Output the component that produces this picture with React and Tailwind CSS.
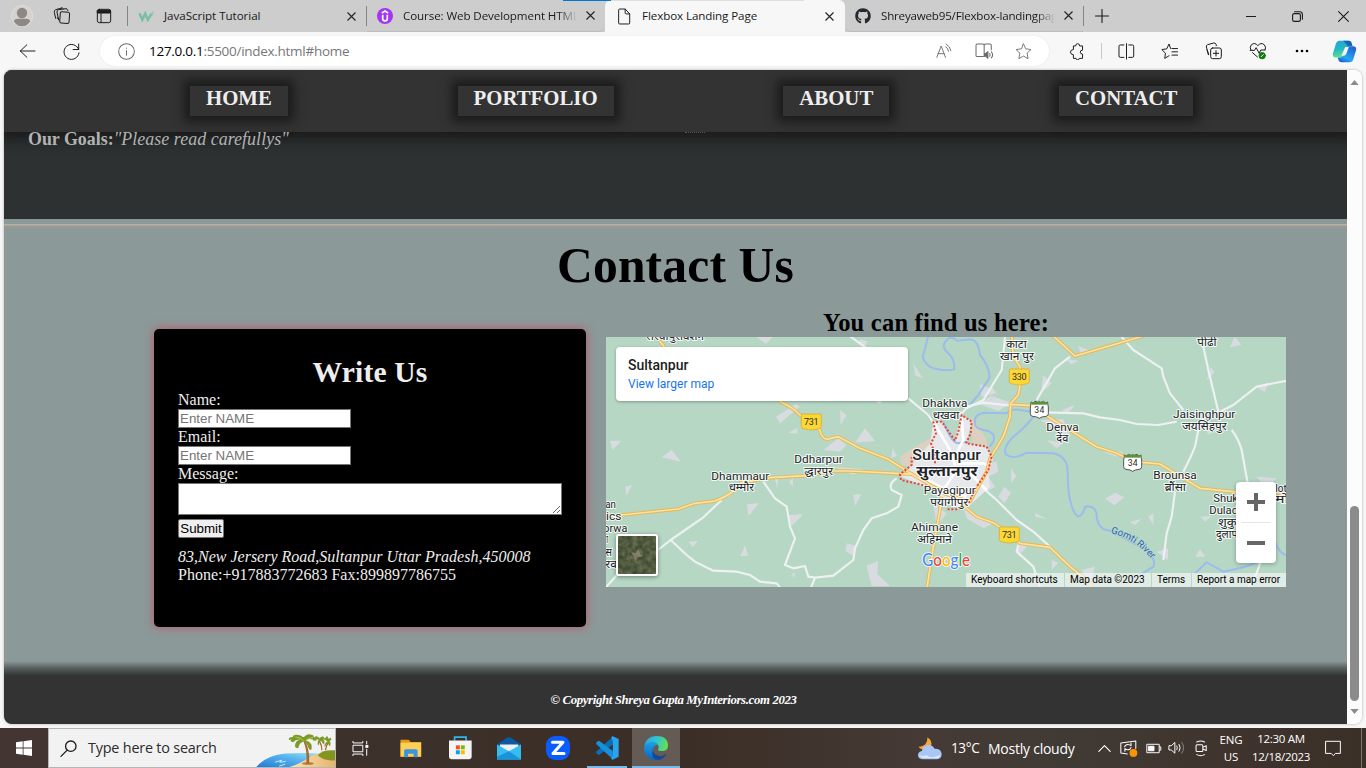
import React from "react";
import { FaGithub } from "react-icons/fa";

const Close = () => (
  <svg viewBox="0 0 9 9" className="h-[9px] w-[9px] shrink-0" fill="none" stroke="#222" strokeWidth="1.1">
    <path d="M.5 .5l8 8M8.5 .5l-8 8" />
  </svg>
);

const Line = ({ box, className, children, stroke = "#1b1b1b", sw = 3 }) => (
  <svg viewBox={box} className={"shrink-0 " + className} fill="none" stroke={stroke} strokeWidth={sw} strokeLinecap="round" strokeLinejoin="round">
    {children}
  </svg>
);

function TabStrip() {
  return (
    <div className="flex h-8 items-center bg-[#cdcdcd] text-[11.6px] text-[#1a1a1a] relative">
      <svg viewBox="33 15 66 66" className="ml-[11px] h-[22px] w-[22px] shrink-0">
        <circle cx="66" cy="48" r="32" fill="#d6d3cf" stroke="#e4e1dd" strokeWidth="2" />
        <circle cx="66" cy="39" r="15.500" fill="#8d8884" />
        <path d="M41 63q4-7 12-7h26q8 0 12 7q-9 16-25 16t-25-16z" fill="#8d8884" />
      </svg>
      <Line box="160 22 54 54" className="ml-5 h-[18px] w-[18px]">
        <rect x="181" y="37" width="28" height="34" rx="5" transform="rotate(4 195 54)" fill="#cdcdcd" />
        <path d="M177 61l-5-24q-1-6 5-7l23-3M168 56l-4-18q-1-6 4-8l18-5M201 28q3 1 4 5M186 25q3-1 5 2M178 60q-4-1-5-6" />
      </Line>
      <Line box="288 24 48 48" className="ml-[25px] h-4 w-4">
        <rect x="292" y="28" width="40" height="40" rx="6" />
        <path d="M293 31h38v8h-38z" fill="#1b1b1b" />
        <path d="M303 40v27" />
      </Line>
      <div className="ml-[15px] h-5 w-px shrink-0 bg-[#858585]" />
      <div className="flex h-full w-[238px] shrink-0 items-center pl-[10px] pr-[10px]">
        <svg viewBox="414 30 50 34" className="h-[11px] w-[17px] shrink-0">
          <path d="M417 37l9 20l9-19l8 19l12-19" fill="none" stroke="#7cc0a2" strokeWidth="8" />
          <path d="M455 33h5l-3 4q5 3 0 6h-3" fill="none" stroke="#7cc0a2" strokeWidth="2" />
        </svg>
        <span className="ml-[9px] flex-1 whitespace-nowrap tracking-[-0.04px]">JavaScript Tutorial</span>
        <Close />
      </div>
      <div className="h-5 w-px shrink-0 bg-[#858585]" />
      <div className="flex h-full w-[238px] shrink-0 items-center rounded-br-md border-b border-[#bcbcbc] pl-[10px] pr-[10px]">
        <svg viewBox="0 0 16 16" className="h-4 w-4 shrink-0">
          <circle cx="8" cy="8" r="8" fill="#a435f0" />
          <path d="M4.800 4.900L8 3.100l3.200 1.800M5.700 6.700v4q0 2.100 2.300 2.100t2.300-2.100v-4" fill="none" stroke="#fff" strokeWidth="1.700" />
        </svg>
        <span className="ml-[10px] w-[176px] shrink-0 overflow-hidden whitespace-nowrap tracking-[-0.1px] [mask-image:linear-gradient(90deg,#000_88%,transparent_99%)]">Course: Web Development HTML</span>
        <span className="flex-1" />
        <Close />
      </div>
      <div className="flex h-full w-[240px] shrink-0 items-center rounded-t-md bg-[#f7f7f7] pl-[13px] pr-[11px]">
        <Line box="503 22 40 52" className="h-[17px] w-[13px]" >
          <path d="M525 25h-17q-3 0-3 3v40q0 3 3 3h28q3 0 3-3v-28l-14-15v12q0 3 3 3h11" />
        </Line>
        <span className="ml-[11px] flex-1 whitespace-nowrap tracking-[-0.09px]">Flexbox Landing Page</span>
        <Close />
      </div>
      <div className="flex h-full w-[238px] shrink-0 items-center rounded-bl-md border-b border-[#bcbcbc] pl-[10px] pr-[10px]">
        <FaGithub className="h-4 w-4 shrink-0 text-[#24292f]" />
        <span className="ml-[10px] w-[176px] shrink-0 overflow-hidden whitespace-nowrap tracking-[-0.2px] [mask-image:linear-gradient(90deg,#000_88%,transparent_99%)]">Shreyaweb95/Flexbox-landingpage</span>
        <span className="flex-1" />
        <Close />
      </div>
      <div className="h-5 w-px shrink-0 bg-[#858585]" />
      <Line box="0 0 14 14" sw={1.1} className="ml-[11px] h-[14px] w-[14px]"><path d="M7 .5v13M.5 7h13" /></Line>
      <div className="ml-auto flex items-center pr-[17px]">
        <div className="h-px w-[10px] bg-[#1b1b1b]" />
        <Line box="0 0 11 11" sw={1.1} className="ml-[36px] h-[11px] w-[11px]">
          <rect x=".6" y="2.600" width="7.800" height="7.800" rx="1.700" /><path d="M2.600 .8h5q2.800 0 2.800 2.800v4.600" />
        </Line>
        <Line box="0 0 11 11" sw={1.1} className="ml-[35px] h-[11px] w-[11px]"><path d="M.6 .6l9.800 9.800M10.400 .6L.6 10.400" /></Line>
      </div>
      <div className="absolute left-[563px] top-0 flex h-px w-[241px]">
        <div className="w-12 bg-[#0078d4]" /><div className="flex-1 bg-[#dedede]" />
      </div>
    </div>
  );
}

function Toolbar() {
  return (
    <div className="flex h-[38px] items-center bg-[#f7f7f7]">
      <Line box="58 128 52 48" className="ml-[19px] h-4 w-[17px]"><path d="M62 152h45M82 133l-20 19l20 19" /></Line>
      <Line box="190 128 52 52" className="ml-[27px] h-[17px] w-[17px]"><path d="M238 148a23 23 0 1 0 1 10M238 131v17h-17" /></Line>
      <div className="ml-[20px] flex h-[30px] w-[949px] shrink-0 items-center rounded-full bg-white shadow-[0_0_2px_#e2e2e2]">
        <Line box="353 128 50 50" stroke="#6e6e6e" className="ml-[18px] h-[17px] w-[17px]"><circle cx="378" cy="153" r="23" /><path d="M378 150v14M378 143v.5" /></Line>
        <span className="ml-[14px] whitespace-nowrap text-[13.500px] tracking-[-0.28px] text-[#777]"><span className="text-black">127.0.0.1</span>:5500/index.html#home</span>
        <div className="ml-auto flex items-center">
          <Line box="90 128 50 48" stroke="#777" className="h-4 w-[17px]"><path d="M95 171l13-34l13 34M99 160h18M122 139q7 6 8 14M123 131q12 7 14 20" /></Line>
          <Line box="208 130 56 50" stroke="#6b6b6b" className="ml-[23px] h-[17px] w-[19px]">
            <path d="M235 134v36M232 170h-18q-3 0-3-3v-30q0-4 3-4h17q4 0 4 4q0-4 4-4h14q3 0 3 4v13" /><path d="M236 161h4l6-6v20l-6-6h-4z" fill="#6b6b6b" /><path d="M251 161q3 4 0 8M256 156q8 9 0 18" />
          </Line>
          <Line box="328 128 52 52" stroke="#777" className="ml-[21px] mr-[17px] h-[17px] w-[17px]"><path d="M354 131l7 15l16 2l-12 11l3 17l-14-8l-14 8l3-17l-12-11l16-2z" /></Line>
        </div>
      </div>
      <Line box="490 126 48 52" className="ml-[20px] h-[17px] w-4"><path d="M505 135h5q0-7 6-7t6 7h9v13q-7 0-7 6t7 6v13h-10q0 4-5 4t-5-4h-8v-11q-9-1-9-8t9-8v-10z" /></Line>
      <div className="ml-4 h-4 w-px shrink-0 bg-[#c9c9c9]" />
      <Line box="634 128 50 52" className="ml-4 h-[17px] w-[17px]"><path d="M651 134h-11q-4 0-4 4v30q0 4 4 4h11M666 134h11q4 0 4 4v30q0 4-4 4h-11M659 130v47" /></Line>
      <Line box="766 128 54 52" className="ml-[26px] h-[17px] w-[18px]"><path d="M795 145l-5-14l-7 15l-15 2l11 11l-2 16l13-8M799 145h17M799 155h17M799 165h17" /></Line>
      <Line box="898 126 54 54" className="ml-[26px] h-[18px] w-[18px]"><rect x="915" y="144" width="32" height="32" rx="6" /><path d="M931 152v16M923 160h16M909 164l-7-23q-1-5 4-7l18-5q5-1 7 4l1 4M908 164q-1-2-1-5l-3-9" /></Line>
      <Line box="1030 128 56 54" className="ml-[26px] h-[18px] w-[19px]">
        <path d="M1035 152q-5-9 2-16q10-8 19 3q9-11 19-3q7 7 3 15M1033 153h13l5-8l9 17l5-10h13M1040 160l15 13" />
        <circle cx="1069" cy="169" r="9.500" fill="#107c10" stroke="#107c10" /><path d="M1066 172l6-6" stroke="#fff" />
      </Line>
      <svg viewBox="0 0 14 4" className="ml-[27px] h-1 w-[14px] shrink-0"><circle cx="2" cy="2" r="1.300" /><circle cx="7" cy="2" r="1.300" /><circle cx="12" cy="2" r="1.300" /></svg>
      <svg viewBox="1276 118 76 70" className="ml-[23px] h-[23px] w-[25px] shrink-0">
        <defs>
          <linearGradient id="cpA" x1="0" y1="0" x2="0.2" y2="1"><stop offset="0" stopColor="#22a6d4" /><stop offset=".55" stopColor="#25b8c4" /><stop offset="1" stopColor="#5fe08f" /></linearGradient>
          <linearGradient id="cpB" x1="0.6" y1="0" x2="0" y2="1"><stop offset="0" stopColor="#2468d8" /><stop offset=".6" stopColor="#22a8f0" /><stop offset="1" stopColor="#1a3fd0" /></linearGradient>
        </defs>
        <path d="M1299 120h28q5 0 7 5l4 11h-8q-6 0-8 7l-7 22q-2 6-8 6h-19q-12 0-9-13l9-29q3-9 11-9z" fill="url(#cpA)" />
        <path d="M1310 120h18q5 0 7 5l3 11h-10q-7 0-9-6z" fill="#1666b4" />
        <path d="M1326 137h14q12 0 9 13l-8 26q-3 10-12 10h-24q-7 0-9-6l-3-9h9q7 0 9-7l7-21q2-6 8-6z" fill="url(#cpB)" />
        <path d="M1308 158l8-19h11l-7 19q-3 8-9 8h-7z" fill="#f7f7f7" />
      </svg>
    </div>
  );
}

const NavItem = ({ children }) => (
  <a className="h-[30px] bg-[#333] px-4 text-[20.800px] font-bold leading-[24px] text-[#eee] shadow-[0_0_10px_6px_#1b1b1b]">{children}</a>
);

const roads = [
  "M18 650L65 645L235 627L285 610L345 603Q380 590 400 573L425 548L510 533L620 527L700 513L750 513L905 521L940 523",
  "M178 122L205 155M520 290L545 307Q575 320 600 345L635 365L660 392Q665 415 680 418L715 410L780 445L865 478L940 525L1000 560L1060 585L1100 625L1130 650L1180 668L1225 700L1260 730L1350 742L1410 800L1460 840L1480 870",
  "M1025 590L1018 640L1000 740L980 870",
  "M1235 105L1240 170L1260 200L1260 255L1255 285L1232 310L1230 350L1210 410L1170 475L1160 515L1110 605L1060 590L1030 580",
  "M1232 313L1295 317L1320 335L1490 440L1550 460L1600 485L1680 492L1800 565L1930 578L2060 578",
  "M1360 108L1425 168L1630 108",
];
const minor = [
  "M10 870L60 815L180 745L212 720L310 652L365 600",
  "M212 720L260 765L285 785L340 812L410 815L450 825L480 845L530 850L540 862",
  "M490 545L525 595L560 620L570 680L585 715L555 795L580 805L615 798L625 830L645 833L700 827L760 780L765 745L790 690L815 655L860 640L895 620L905 585L875 570Q865 550 890 535",
  "M645 833L630 870",
  "M745 105L800 145M925 295L985 345L1020 400L1050 450",
  "M1410 170L1365 205L1345 240L1330 265L1310 300",
  "M1215 111L1205 210L1150 300L1100 325L1080 345",
  "M1100 320L1150 308L1232 317M1335 337L1450 340L1500 352L1560 360L1610 372L1675 375L1730 365",
  "M1560 105L1600 150L1685 205L1690 230L1710 280L1750 330",
  "M1810 140L1825 210L1855 335M1860 335L1900 315L1970 260L2060 242",
  "M1895 390Q1915 415 1925 450L1945 560M1795 390L1785 440L1770 475L1750 515M1725 575L1715 650L1700 700L1690 780",
  "M1150 565L1190 600L1250 660L1300 695L1350 740M1255 735L1250 755L1300 800L1320 860",
  "M1990 760L1970 820L1940 870",
];
const water = [
  "M985 105Q975 150 968 170Q975 195 1000 205Q1040 215 1062 208Q1066 180 1045 160Q1020 140 1040 120Q1055 105 1070 122L1110 118Q1135 120 1140 165Q1170 200 1168 235Q1150 260 1135 285L1100 325",
  "M1125 370Q1120 345 1150 338L1220 340Q1235 325 1260 330L1295 335",
  "M1125 370Q1125 385 1150 390Q1190 395 1180 425L1170 440",
  "M1310 335Q1290 370 1235 415Q1205 450 1220 465Q1245 480 1280 458L1360 460Q1405 470 1403 520L1405 570Q1415 640 1435 650Q1450 645 1455 620Q1490 615 1490 650Q1495 690 1530 692L1640 750Q1670 780 1660 800L1620 825",
  "M1780 825L1820 787L1870 815L1930 802L1990 780M2020 710Q2035 760 2058 765",
  "M1030 365Q1055 430 1075 430L1100 425",
];
const red = "M1005 490L1005 460L993 430L1008 400L1000 367L1025 365L1065 422L1075 395L1085 345L1115 365L1112 400L1098 430L1160 440L1175 470L1165 510L1130 560L1105 610L1075 628L1040 628M935 470L935 495L900 523L903 540L990 560";
const patches = "M30 422l35 0l-28 28zM185 472l30-22l28 35zM75 560l22-5l-18 32zM440 612l36-2l-30 38zM565 645l45-2l-35 35zM760 585l24-3l-18 35zM435 735l10 32l-24 2zM265 725l28-2l-14 18zM740 730l28 8l-12 28l-20-14zM800 797l34-14l-2 40l38 35h-55zM565 398l28-15l-2 18zM528 350l60-38l12 8l-60 50zM720 330l20 16l-18 28zM795 385l30 38l-60 5zM670 450l45-35l25 20l-20 20zM878 445l-5 30l18-8zM940 190l28 45l-22-8zM780 118l22 6l-8 18l-20-14zM470 111h48l-20 20zM525 535l10 0l-4 32zM568 545l12-15l-2 30zM700 500l90 8l-30 16zM1140 252l45 20l-40 20zM1330 225l25 25l-20 20l-10-10zM1435 138l30 12l-20 20zM1395 175l42 8l-24 10zM1890 142l14-32l20 24zM1820 242l12-40l12 14zM1970 262l35-15l-10 30zM1130 310l45-22l60 20l-40 25zM1385 330l40-15l-20 25zM1320 360l70-2l20 50l-30-10zM1340 420l50 10l-20 15zM1233 505l16 24l-16 20zM1195 590l18-30l20 18l-20 32zM1515 596l30-18l28 14l-30 24zM1645 650l15-10v35zM1305 638l35 20l-34-8zM1590 665l35-8l-20 17zM1800 650l34-2l-18 17zM1785 770l15-22l16 22zM1670 755l34-10v35zM1355 780l20 8l-20 22zM1090 620l90 50l-30 15l-50-30zM1445 810l40-10l-15 50zM1820 395l18-4l-10 14zM1000 610l40 30l-30 40zM1510 455l60 0l-20 15zM1970 530l60 5l-30 30zM1160 490l30-5l5 30l-30 15zM1135 555l30-25l20 30l-25 15zM1145 290l30-30l15 20zM1250 730l30 10l-25 30zM575 820l12 0l-5 14zM820 300l28 0l-8 14z";

const labels = [
  [138, 121, 174, "सरैयापुरावंशन", 31],
  [334, 539, 174, "Dhammaur", 34], [386, 574, 76, "धम्मौर", 31],
  [583, 489, 145, "Ddharpur", 34], [613, 526, 86, "द्धारपुर", 31],
  [967, 321, 135, "Dhakhva", 34], [998, 356, 80, "धखवा", 31],
  [971, 582, 156, "Payagipur", 34], [991, 617, 114, "पयागीपुर", 31],
  [933, 692, 141, "Ahimane", 34], [951, 728, 104, "अहिमाने", 31],
  [1218, 143, 62, "काटा", 31], [1200, 179, 102, "खान पुर", 31],
  [1792, 137, 58, "पीढी", 31],
  [1339, 392, 97, "Denva", 34], [1369, 427, 36, "देंव", 31],
  [1719, 354, 187, "Jaisinghpur", 34], [1746, 389, 134, "जयसिंहपुर", 31],
  [1660, 537, 130, "Brounsa", 34], [1694, 572, 64, "ब्रौंसा", 31],
  [1840, 606, 74, "Shuk", 34], [1828, 641, 86, "Dulad", 34],
  [1854, 679, 56, "शुकु", 31], [1848, 714, 64, "दुलाप", 31],
  [2026, 577, 34, "lot", 34], [2026, 608, 40, "मो", 31],
  [16, 623, 32, "an", 34], [18, 660, 46, "ics", 34], [10, 696, 72, "orwa", 34],
  [6, 730, 18, "ा", 31], [16, 767, 20, "स", 31], [16, 803, 44, "रवा", 31],
];

const Shield = ({ x, y, n }) => (
  <g>
    <path d={`M${x - 30} ${y - 21}q0-3 3-3h54q3 0 3 3v34q0 6-6 7l-16 3q-8 2-16 0l-16-3q-6-1-6-7z`} fill="#fdd835" stroke="#d9a520" strokeWidth="2" />
    <text x={x} y={y + 10} textAnchor="middle" fontSize="27" textLength="44" fill="#2c2c2c" stroke="none">{n}</text>
  </g>
);
const Nh = ({ x, y }) => (
  <g>
    <path d={`M${x - 25} ${y - 20}q8 6 12-2q12 6 13 0q1 6 13 0q4 8 12 2q0 8 2 15v20q0 7-7 8q-14 1-20 6q-6-5-20-6q-7-1-7-8v-20q2-7 2-15z`} fill="#fff" stroke="#555" strokeWidth="3" />
    <path d={`M${x - 24} ${y - 20}h48v8h-48z`} fill="#5c9434" />
    <text x={x} y={y + 13} textAnchor="middle" fontSize="26" textLength="30" fill="#2c2c2c" stroke="none">34</text>
  </g>
);

function MapFrame() {
  return (
    <div className="relative h-[250px] w-[680px] overflow-hidden font-['Roboto','Noto_Sans',sans-serif]">
      <svg viewBox="18 111 2040 750" className="h-[250px] w-[680px]" fill="none" strokeLinejoin="round">
        <rect x="18" y="111" width="2040" height="750" fill="#b5d7c3" />
        <path d={patches} fill="#d8dce1" />
        <path d="M900 468L960 432L1000 410L990 450L935 500L905 495zM1115 350L1150 400L1165 440L1115 430z" fill="#dcd0c0" />
        <path d="M903 530L940 490L990 430L1000 367L1025 362L1062 425L1085 345L1115 365L1100 430L1160 442L1180 475L1165 520L1170 560L1105 620L1060 620L1000 570z" fill="#e7e8ec" />
        {water.map((d) => <path key={d} d={d} stroke="#9bbcec" strokeWidth="6" />)}
        <path d="M500 160L650 365L760 425L850 440L990 405M1170 300L1295 205M1110 600L1350 770M970 740L960 861" stroke="#c6d3cb" strokeWidth="2.500" />
        {minor.map((d) => <path key={d} d={d} stroke="#eef1f2" strokeWidth="6.500" />)}
        <path d="M1000 365L1050 450L1070 510M1085 350L1090 420L1070 460M1070 510L1030 570M950 520L1020 560L1100 590M1070 490L1150 490L1170 500M1100 510L1160 570" stroke="#fff" strokeWidth="8" />
        {roads.map((d) => <path key={d} d={d} stroke="#e9b84c" strokeWidth="10.500" />)}
        {roads.map((d) => <path key={d} d={d} stroke="#f8e2ad" strokeWidth="5" />)}
        <path d={red} stroke="#ea4335" strokeWidth="6" strokeDasharray="6 5.500" />
        <Shield x={634} y={366} n="731" />
        <Shield x={1258} y={231} n="330" />
        <Shield x={1228} y={705} n="731" />
        <Nh x={1318} y={326} />
        <Nh x={1598} y={485} />
        <g stroke="#fff" strokeOpacity=".85" strokeWidth="6" fill="#202428" style={{ paintOrder: "stroke" }}>
          {labels.map(([x, y, w, t, s]) => (
            <text key={t + x} x={x} y={y} textLength={w} lengthAdjust="spacingAndGlyphs" fontSize={s} strokeLinejoin="round">{t}</text>
          ))}
          <text x="937" y="481" textLength="206" lengthAdjust="spacingAndGlyphs" fontSize="45" fontWeight="500">Sultanpur</text>
          <text x="949" y="529" textLength="184" lengthAdjust="spacingAndGlyphs" fontSize="42" fontWeight="700">सुल्तानपुर</text>
        </g>
        <path id="gomti" d="M1532 700Q1600 712 1655 778" />
        <text fontSize="29" fill="#2a62c4" stroke="#b5d7c3" strokeWidth="5" style={{ paintOrder: "stroke" }}><textPath href="#gomti" textLength="148">Gomti River</textPath></text>
        <text x="967" y="798" fontSize="50" textLength="143" lengthAdjust="spacingAndGlyphs" fontWeight="500" fontFamily="Lato" stroke="#fff" strokeWidth="5" style={{ paintOrder: "stroke" }}>
          <tspan fill="#4285f4">G</tspan><tspan fill="#ea4335">o</tspan><tspan fill="#fbbc05">o</tspan><tspan fill="#4285f4">g</tspan><tspan fill="#34a853">l</tspan><tspan fill="#ea4335">e</tspan>
        </text>
      </svg>
      <div className="absolute left-[10px] top-[10px] h-[54px] w-[292px] rounded-sm bg-white pl-3 pt-[9px] shadow-[0_1px_3px_rgba(0,0,0,0.3)]">
        <div className="text-sm font-medium leading-[18px] text-[#1d1d1d]">Sultanpur</div>
        <div className="mt-[2px] text-xs leading-4 text-[#1a73e8]">View larger map</div>
      </div>
      <div className="absolute bottom-[11px] left-[10px] h-[42px] w-[42px] overflow-hidden rounded-[3px] border-2 border-white shadow-[0_1px_4px_rgba(0,0,0,0.4)]">
        <svg viewBox="0 0 38 38" className="h-full w-full">
          <defs><filter id="soil" colorInterpolationFilters="sRGB"><feTurbulence type="fractalNoise" baseFrequency=".2" numOctaves="4" seed="4" /><feColorMatrix values=".3 0 0 0 .17  .25 0 0 0 .23  .2 0 0 0 .15  0 0 0 0 1" /></filter></defs>
          <rect width="38" height="38" filter="url(#soil)" />
          <path d="M13 16l5 1l2-4l2 5l3 2l-5 1l-3 5l-1-5z" fill="#a3967c" opacity=".6" />
        </svg>
      </div>
      <div className="absolute bottom-6 right-[10px] flex h-[81px] w-10 flex-col items-center rounded-sm bg-white shadow-[0_1px_4px_rgba(0,0,0,0.3)]">
        <svg viewBox="0 0 40 40" className="h-10 w-10"><path d="M11 20h18M20 11v18" stroke="#666" strokeWidth="4" /></svg>
        <div className="h-px w-[30px] bg-[#e6e6e6]" />
        <svg viewBox="0 0 40 40" className="h-10 w-10"><path d="M11 20h18" stroke="#666" strokeWidth="4" /></svg>
      </div>
      <div className="absolute bottom-0 right-0 flex h-[14px] w-[320px] gap-px whitespace-nowrap text-[10px] leading-[14px] text-black">
        <span className="w-[98px] bg-[#f5f5f5]/70 pl-[5px]">Keyboard shortcuts</span>
        <span className="w-[86px] bg-[#f5f5f5]/70 pl-[5px] tracking-[-0.02px]">Map data ©2023</span>
        <span className="w-[39px] bg-[#f5f5f5]/70 pl-[5px]">Terms</span>
        <span className="flex-1 bg-[#f5f5f5]/70 pl-[5px] tracking-[-0.02px]">Report a map error</span>
      </div>
    </div>
  );
}

const Field = ({ label }) => (
  <label className="block leading-[18px]">
    <span className="block">{label}</span>
    <input placeholder="Enter NAME" className="block h-[19px] w-[173px] border border-[#767676] bg-white px-px font-['Liberation_Sans',Arial,sans-serif] text-[13.333px] leading-[15px] placeholder:text-[#757575]" />
  </label>
);

function Page() {
  return (
    <div className="flex w-[1343px] flex-col overflow-hidden bg-[#8b9998] font-['Liberation_Serif',serif]">
      <header className="relative flex h-[62px] items-start gap-[169.700px] bg-[#333] pl-[186px] pt-4 shadow-[0_2px_12px_6px_rgba(20,22,20,0.75)]">
        <NavItem>HOME</NavItem><NavItem>PORTFOLIO</NavItem><NavItem>ABOUT</NavItem><NavItem>CONTACT</NavItem>
        <span className="absolute left-[681px] top-[61px] h-[2px] w-5 border-b border-dotted border-[#555]" />
      </header>
      <div className="h-[87px] bg-[#2d3132] pl-6">
        <p className="relative whitespace-nowrap text-[17.900px] leading-[15px] text-[#b3b3b3]"><b>Our Goals:</b><i className="tracking-[0.06px]">"Please read carefullys"</i></p>
      </div>
      <section className="flex h-[442px] flex-col">
        <div className="mt-[5px] h-px bg-[#b2b3a5]" />
        <div className="h-px bg-[#ada198]" />
        <div className="h-1 bg-gradient-to-b from-[#9a9b96] to-[#8b9998]" />
        <h1 className="mt-[7px] text-center text-[49.600px] font-bold leading-[57px] tracking-[0.15px] text-black">Contact Us</h1>
        <div className="flex items-start gap-5 pl-[150px]">
          <div className="mt-[35px] h-[298px] w-[432px] shrink-0 rounded-[5px] bg-black px-6 pt-[26px] text-base leading-[18px] text-[#eee] shadow-[0_0_10px_#bd5068]">
            <h2 className="mb-[2px] text-center text-[29.600px] font-bold leading-[34px] tracking-[0.15px]">Write Us</h2>
            <Field label="Name:" />
            <Field label="Email:" />
            <label className="block leading-[18px]">Message:
              <textarea className="block h-8 w-full border border-[#767676] bg-white" />
            </label>
            <button className="mt-1 block h-[19px] w-[46px] whitespace-nowrap rounded-[2px] border border-[#767676] bg-[#efefef] text-center font-['Liberation_Sans',Arial,sans-serif] text-[13.333px] leading-[16px] text-black">Submit</button>
            <address className="mt-[10px] whitespace-nowrap">83,New Jersery Road,Sultanpur Uttar Pradesh,450008</address>
            <p>Phone:+917883772683 Fax:899897786755</p>
          </div>
          <div className="mt-4 w-[680px]">
            <h3 className="h-[27px] pr-[20px] text-center text-[24.500px] font-bold leading-[25px] tracking-[0.22px] text-black">You can find us here:</h3>
            <MapFrame />
          </div>
        </div>
      </section>
      <div className="h-[15px] bg-gradient-to-b from-[#8b9998] via-[#565d5c] to-[#2f3333]" />
      <footer className="h-12 bg-[#333] pt-4 text-center text-[12.800px] font-bold italic leading-4 text-white">
        <span className="tracking-[-0.35px] pr-1">© Copyright Shreya Gupta MyInteriors.com 2023</span>
      </footer>
    </div>
  );
}

function Scrollbar() {
  return (
    <div className="flex w-[15px] flex-col items-center bg-[#fcfcfc]">
      <svg viewBox="0 0 10 6" className="mt-[10px] h-[5px] w-[9px]"><path d="M5 0l5 6H0z" fill="#8b8b8b" /></svg>
      <div className="mt-[421px] h-[195px] w-[9px] rounded-full bg-[#8b8b8b]" />
      <svg viewBox="0 0 10 6" className="mt-2 h-[5px] w-[9px]"><path d="M5 6l5-6H0z" fill="#8b8b8b" /></svg>
    </div>
  );
}

const Cell = ({ children, className = "" }) => (
  <div className={"flex h-full w-12 shrink-0 items-center justify-center " + className}>{children}</div>
);

const Palm = () => (
  <svg viewBox="765 266 242 116" className="ml-auto h-[38.500px] w-[80px] shrink-0 self-end" preserveAspectRatio="none">
    <defs>
      <linearGradient id="sea" x1="0" x2="1" y1="1" y2="0"><stop offset="0" stopColor="#1d76d0" /><stop offset=".6" stopColor="#58b4f0" /><stop offset="1" stopColor="#9fe6f2" /></linearGradient>
      <linearGradient id="sand" x1="0" x2="1"><stop offset="0" stopColor="#fdeab8" /><stop offset="1" stopColor="#e7b26e" /></linearGradient>
    </defs>
    <path d="M766 384q30-38 90-44q60-4 110 0v44z" fill="url(#sea)" />
    <path d="M826 366l20-6l-6 6l18-2M838 378l18-6" stroke="#c9ecff" strokeWidth="3" fill="none" />
    <path d="M858 384q50-14 75-36q30-14 75-4v40z" fill="url(#sand)" />
    <path d="M955 346q10-18 52-16v30q-30 4-52-14z" fill="#83951e" />
    <ellipse cx="925" cy="370" rx="18" ry="4" fill="#b97b3e" />
    <path d="M912 304q12 30 8 66h9q2-40-12-68zM957 304q10 14 8 26h4q0-18-8-28zM984 306q-6 12-8 24h4q2-14 8-22z" fill="#a8682e" />
    <g fill="#7c9a26">
      <path d="M914 302q-22-16-46-2q-4-10 12-10q-2-6 10-7q14 0 22 10q8-14 24-10q8 1 6 7q12 2 8 12q-20-10-32-2q24 8 18 28q-6 4-10-6q-2-12-14-18q-14 4-16 20q-10 0-10-8q2-16 18-18q-16-2-24 8q-10-2-6-8q10-12 40-8z" />
      <path d="M960 300q-12-8-18 4q-2-8 6-10q-6-6 2-6q8 2 10 6q6-8 14-4q2 6-4 8q8 4 4 14q-6-2-8-10q-8 2-8 14q-6-2-2-16zM984 304q-10-10-16-4q2-8 10-6q0-6 6-6l4 8q6-8 8 2q-2 4-6 4q6 4 2 16q-6-4-6-10q-6 4-10 12q-4-8 8-16z" />
    </g>
    <path d="M888 290q18 2 24 12M940 292q-14 0-22 10" stroke="#b7c75a" strokeWidth="3" fill="none" />
  </svg>
);

function Taskbar() {
  return (
    <div className="flex h-10 items-center bg-[linear-gradient(90deg,#433632_0%,#3c302a_30%,#3a2e26_50%,#453a35_68%,#403a35_78%,#3f342d_90%,#3b3028_100%)] text-white">
      <Cell><svg viewBox="0 0 16 16" className="h-4 w-4" fill="#fff"><path d="M0 2.300L6.700 1.300V7.600H0zM7.500 1.200L16 0v7.600H7.500zM0 8.400h6.700v6.300L0 13.700zM7.500 8.400H16V16l-8.500-1.200z" /></svg></Cell>
      <div className="flex h-full w-[288px] shrink-0 items-center border border-[#b9b5b2] bg-[#f2f2f2] pl-[11px]">
        <Line box="178 298 52 52" className="h-[17px] w-[17px]" sw={4}><circle cx="211" cy="317" r="16" /><path d="M200 329l-19 19" /></Line>
        <span className="ml-[11px] whitespace-nowrap text-[14.400px] tracking-[-0.2px] text-[#2c2c2c]">Type here to search</span>
        <Palm />
      </div>
      <Cell>
        <svg viewBox="1054 298 52 50" className="h-[17px] w-[17px]" fill="none" stroke="#fff" strokeWidth="3"><path d="M1057 300v6h30v-6M1057 313h30v20h-30zM1057 346v-6h30v6M1099 300v10M1099 324v21" /><path d="M1095 312h9v9h-9z" fill="#fff" stroke="none" /></svg>
      </Cell>
      <div className="ml-[3px] flex h-full gap-px">
        <Cell>
          <svg viewBox="1200 295 66 58" className="h-[19px] w-[22px]"><path d="M1201 297h25l6 7h32v45h-63z" fill="#e49b14" /><path d="M1201 306h63v43h-63z" fill="#fccf56" /><path d="M1212 351v-20q0-5 5-5h31q5 0 5 5v20h-12v-11h-17v11z" fill="#3a93dc" /></svg>
        </Cell>
        <Cell>
          <svg viewBox="-6 290 70 72" className="h-6 w-[23px]"><path d="M11 304v-11h35v11" fill="none" stroke="#31b5ee" strokeWidth="5" /><path d="M-6 303h69v50q0 7-7 7h-55q-7 0-7-7z" fill="#f4f4f4" /><path d="M15 318h12v12H15z" fill="#f25022" /><path d="M30 318h12v12H30z" fill="#7fba00" /><path d="M15 333h12v12H15z" fill="#00a4ef" /><path d="M30 333h12v12H30z" fill="#ffb900" /></svg>
        </Cell>
        <Cell>
          <svg viewBox="141 290 72 68" className="h-[23px] w-6"><path d="M141 312l30-20q6-3 12 0l30 20v45h-72z" fill="#0c59a4" /><path d="M150 312h55v20h-55z" fill="#eceff3" /><path d="M141 312l36 20l36-20v45h-72z" fill="#35bdf0" /><path d="M141 357v-8l36-17l36 25z" fill="#1a93dd" /></svg>
        </Cell>
        <Cell>
          <svg viewBox="0 0 24 24" className="h-6 w-6"><rect width="24" height="24" rx="9" fill="#0b5cff" /><path d="M6.500 6.200h10.500L7 17.600h11" fill="none" stroke="#fff" strokeWidth="3" strokeLinejoin="round" strokeLinecap="round" /></svg>
        </Cell>
        <Cell className="relative">
          <svg viewBox="435 287 72 74" className="h-6 w-6"><path d="M489 289l-50 45q-4 3 0 7l4 3q3 2 6 0l40-31z" fill="#0a6fb8" /><path d="M489 359l-50-46q-4-3 0-7l4-3q3-2 6 0l40 30z" fill="#1690dc" /><path d="M489 288l18 8v55l-18 9q-3 0-5-3l5-12v-41l-5-13q2-3 5-3z" fill="#27a4ee" /></svg>
          <span className="absolute bottom-0 left-1 h-[2px] w-10 bg-[#76b9ed]" />
        </Cell>
        <Cell className="relative bg-[#655b55]">
          <svg viewBox="0 0 24 24" className="h-6 w-6">
            <defs>
              <linearGradient id="eA" x1="0" x2="1" y1="0.3" y2="0.5"><stop offset="0" stopColor="#27a8e8" /><stop offset=".5" stopColor="#2fc6cf" /><stop offset="1" stopColor="#66e04e" /></linearGradient>
              <linearGradient id="eB" x1="0" x2="0" y1="0" y2="1"><stop offset="0" stopColor="#1fa0e6" /><stop offset="1" stopColor="#0a63c4" /></linearGradient>
            </defs>
            <path d="M.3 10.500Q2 0 12 0q12 0 12 9.500q0 5.500-6 5.500q-4.500 0-4-2q1.500-1.200 0-4Q10 3 .3 10.500z" fill="url(#eA)" />
            <path d="M0 12Q1 6 8 6q4 0 6 3Q10 8.500 9 13q-.6 7 6 10.600Q4 25.500 1 16.500Q0 14 0 12z" fill="url(#eB)" />
            <path d="M9 13q-.3 5.500 6 7q4 .6 7-2.200q.5.3 0 1.200q-3 4.500-8 5Q6 22.500 9 13z" fill="#114a9a" />
          </svg>
          <span className="absolute bottom-0 left-0 h-[2px] w-12 bg-[#76b9ed]" />
        </Cell>
      </div>
      <div className="ml-auto flex h-full items-center">
        <svg viewBox="35 288 74 70" className="h-[23px] w-6 shrink-0">
          <path d="M64 289q14 6 12 24q-8 16-24 14q-12-2-15-10q10 2 20-6q8-10 7-22z" fill="#f3a63a" />
          <path d="M48 356q-13-1-13-12t12-13q3-19 20-19q14 0 19 12q20-1 22 16q0 15-14 16z" fill="#a9c6f5" />
          <path d="M50 352q-10-2-10-9q8 6 22 1q10 10 30 3q8-2 12-6q-2 12-12 12z" fill="#dbe9ff" />
        </svg>
        <span className="ml-[9px] w-[28px] whitespace-nowrap text-[13.600px] tracking-[-0.4px]">13°C</span>
        <span className="ml-[9px] w-[87px] whitespace-nowrap text-[14px] tracking-[-0.24px]">Mostly cloudy</span>
        <Line box="578 310 38 24" stroke="#fff" sw={3.5} className="ml-[23px] h-2 w-[13px]"><path d="M580 332l17-17l17 17" /></Line>
        <Line box="644 300 52 50" stroke="#fff" className="ml-[9px] h-[17px] w-[18px]"><path d="M665 341l-19-3v-29l44-6v22M657 320q2-7 10-7q6 0 9 4v-8M676 322q-2 7-9 7q-7 0-9-4v8" /><circle cx="683" cy="338" r="10" fill="#ff9400" stroke="#ff9400" /></Line>
        <Line box="720 308 46 34" stroke="#fff" className="ml-[8px] h-[11px] w-[16px]"><path d="M722 312h37v26h-37zM760 320h4v10h-4" /><path d="M727 318h16v14h-16z" fill="#fff" /></Line>
        <Line box="786 304 52 42" stroke="#fff" className="ml-[6px] h-[14px] w-[17px]"><path d="M790 318h6l11-10v33l-11-10h-6zM813 319q4 5 0 11M820 314q7 10 0 21" /><path d="M828 308q12 16 0 33" stroke="#8c847e" /></Line>
        <Line box="868 300 38 50" stroke="#fff" className="ml-[10px] h-[17px] w-[13px]"><rect x="871" y="314" width="20" height="20" rx="3" /><path d="M892 321l9-4v14l-9-4M873 306q12-6 23 0M873 343q12 6 23 0" /></Line>
        <div className="ml-[10px] w-[26px] text-center text-[11.500px] leading-[17px]"><div className="tracking-[-0.2px]">ENG</div><div>US</div></div>
        <div className="ml-[5px] w-[64px] whitespace-nowrap text-center text-[11.500px] leading-[18px] tracking-[-0.3px]"><div>12:30 AM</div><div>12/18/2023</div></div>
        <Line box="1256 298 52 50" stroke="#fff" className="ml-[12px] h-[17px] w-[17px]"><path d="M1259 301h44v37h-15l-6 7l-7-7h-16z" /></Line>
        <div className="ml-[19px] mr-1 h-full w-px bg-[#7d756f]" />
      </div>
    </div>
  );
}

export default function App() {
  return (
    <div className="flex h-[768px] w-[1366px] flex-col overflow-hidden bg-[#f7f7f7] font-['Open_Sans','Noto_Sans',sans-serif]">
      <TabStrip />
      <Toolbar />
      <div className="mx-1 mb-1 flex h-[654px] overflow-hidden rounded-lg shadow-[0_0_3px_rgba(0,0,0,0.3)]">
        <Page />
        <Scrollbar />
      </div>
      <Taskbar />
    </div>
  );
}
